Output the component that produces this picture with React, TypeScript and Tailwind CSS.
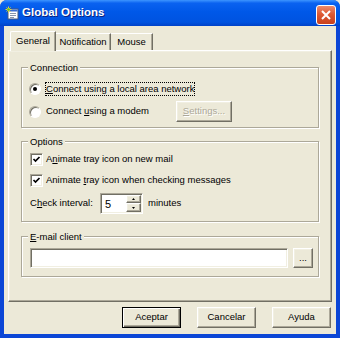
import React from "react";

const raised =
	"border border-t-white border-l-white border-r-[#716F64] border-b-[#716F64] shadow-[inset_-1px_-1px_0_#ACA899,inset_1px_1px_0_#F1EFE2]";
const sunken =
	"border border-t-[#ACA899] border-l-[#ACA899] border-r-white border-b-white shadow-[inset_1px_1px_0_#716F64,inset_-1px_-1px_0_#F1EFE2]";
const etched = "border border-[#ACA899] shadow-[inset_1px_1px_0_#fff,1px_1px_0_#fff]";

function Radio({ checked }: { checked?: boolean }) {
	return (
		<div className="relative w-[12px] h-[12px] shrink-0 rounded-full bg-white border border-t-[#ACA899] border-l-[#ACA899] border-r-white border-b-white shadow-[inset_1px_1px_0_#716F64]">
			{checked && <div className="absolute left-[3px] top-[3px] w-[4px] h-[4px] rounded-full bg-black" />}
		</div>
	);
}

function Check() {
	return (
		<div className={`w-[13px] h-[13px] shrink-0 bg-white flex items-center justify-center ${sunken}`}>
			<svg width="9" height="9" viewBox="0 0 9 9">
				<path d="M1.5 4 L3.5 6 L7.5 2" fill="none" stroke="#000" strokeWidth="1.7" />
			</svg>
		</div>
	);
}

function Group({ label, className, children }: { label: React.ReactNode; className?: string; children: React.ReactNode }) {
	return (
		<div className={`relative ${etched} ${className ?? ""}`}>
			<span className="absolute left-[6px] -top-[7px] px-[2px] bg-[#ECE9D8] leading-[13px]">{label}</span>
			{children}
		</div>
	);
}

function Key({ children }: { children: React.ReactNode }) {
	return <span className="underline underline-offset-[1px]">{children}</span>;
}

export default function App() {
	return (
		<div className="w-[340px] h-[338px] bg-[#ECE9D8] font-['Liberation_Sans',Arial,sans-serif] text-[9.5px] text-black">
			<div className="flex flex-col h-full rounded-t-[7px] overflow-hidden bg-[#0B46D6]">
				{/* title bar */}
				<div className="h-[26px] shrink-0 flex bg-[linear-gradient(180deg,#3D95FF_0%,#0A62F0_12%,#0058E8_45%,#0053E0_85%,#0142C8_100%)]">
					<div className="flex items-center pl-[5px]">
						<svg width="14" height="14" viewBox="0 0 14 14">
							<rect x="3" y="3" width="10" height="10" fill="#fff" stroke="#4a5a7a" strokeWidth="1" />
							<rect x="3.5" y="3.5" width="9" height="2" fill="#3c6fd0" />
							<path d="M5 7.5h6M5 9.5h6M5 11.5h4" stroke="#8a96aa" strokeWidth="1" />
							<path d="M3.5 0.5v6M0.5 3.5h6M1.5 1.5l4 4M5.5 1.5l-4 4" stroke="#e8d838" strokeWidth="1" />
							<circle cx="3.5" cy="3.5" r="1.3" fill="#5ac02a" />
						</svg>
						<span className="ml-[3px] text-[11.5px] font-bold text-white [text-shadow:1px_1px_0_#0A2480]">
							Global Options
						</span>
					</div>
					<div className="ml-auto mt-[5px] mr-[4px] w-[20px] h-[20px] rounded-[3px] border border-white bg-[linear-gradient(180deg,#EC8B6C_0%,#DE5A34_45%,#C8401C_100%)] flex items-center justify-center">
						<svg width="12" height="12" viewBox="0 0 12 12">
							<path d="M2 2 L10 10 M10 2 L2 10" stroke="#fff" strokeWidth="2" />
						</svg>
					</div>
				</div>

				{/* client area */}
				<div className="mx-[4px] mb-[4px] flex-1 flex flex-col bg-[#ECE9D8]">
					{/* tabs */}
					<div className="mt-[5px] pl-[6px] h-[19px] flex items-end">
						<div className="relative z-10 -mb-[1px] w-[46px] h-[20px] flex items-center justify-center bg-[#ECE9D8] border-l border-t border-white border-r border-r-[#716F64] rounded-tl-[2px] shadow-[inset_-1px_0_0_#ACA899]">
							General
						</div>
						<div className="w-[55px] h-[17px] flex items-center justify-center border-t border-white border-r border-r-[#716F64] shadow-[inset_-1px_0_0_#ACA899]">
							Notification
						</div>
						<div className="w-[42px] h-[17px] flex items-center justify-center border-t border-white border-r border-r-[#716F64] shadow-[inset_-1px_0_0_#ACA899]">
							Mouse
						</div>
					</div>

					{/* tab panel */}
					<div className={`mx-[4px] h-[252px] flex flex-col pt-[16px] px-[12px] ${raised}`}>
						<Group label="Connection" className="h-[61px] pl-[7px] pt-[13px]">
							<div className="h-[16px] flex items-center">
								<Radio checked />
								<span className="ml-[4px] border border-dotted border-black leading-[12px]">
									<Key>C</Key>onnect using a local area network
								</span>
							</div>
							<div className="mt-[4px] h-[21px] flex items-center">
								<div className="w-[147px] flex items-center">
									<Radio />
									<span className="ml-[5px]">
										Connect <Key>u</Key>sing a modem
									</span>
								</div>
								<div className={`w-[56px] h-[21px] flex items-center justify-center text-[#ACA899] [text-shadow:1px_1px_0_#fff] ${raised}`}>
									<Key>S</Key>ettings...
								</div>
							</div>
						</Group>

						<Group label="Options" className="mt-[13px] h-[81px] pl-[8px] pt-[9px]">
							<div className="h-[16px] flex items-center">
								<Check />
								<span className="ml-[3px]">
									A<Key>n</Key>imate tray icon on new mail
								</span>
							</div>
							<div className="mt-[5px] h-[16px] flex items-center">
								<Check />
								<span className="ml-[3px]">
									Animate <Key>t</Key>ray icon when checking messages
								</span>
							</div>
							<div className="mt-[5px] h-[21px] flex items-center">
								<span className="w-[70px]">
									C<Key>h</Key>eck interval:
								</span>
								<div className={`w-[43px] h-[21px] bg-white flex p-[1px] ${sunken}`}>
									<span className="flex-1 pl-[3px] pt-[2px] text-[11px] leading-[14px]">5</span>
									<div className="w-[15px] flex flex-col">
										<div className={`h-[8px] bg-[#ECE9D8] flex items-center justify-center ${raised}`}>
											<svg width="3" height="2" viewBox="0 0 3 2">
												<path d="M1.5 0 L3 2 L0 2 Z" fill="#000" />
											</svg>
										</div>
										<div className={`h-[9px] bg-[#ECE9D8] flex items-center justify-center ${raised}`}>
											<svg width="3" height="2" viewBox="0 0 3 2">
												<path d="M0 0 L3 0 L1.5 2 Z" fill="#000" />
											</svg>
										</div>
									</div>
								</div>
								<span className="ml-[5px]">minutes</span>
							</div>
						</Group>

						<Group label={<><Key>E</Key>-mail client</>} className="mt-[14px] h-[41px] pl-[8px] pt-[11px]">
							<div className="flex items-center">
								<div className={`w-[258px] h-[20px] bg-white ${sunken}`} />
								<div className={`ml-[5px] w-[20px] h-[20px] flex items-center justify-center ${raised}`}>...</div>
							</div>
						</Group>
					</div>

					{/* dialog buttons */}
					<div className="mt-[5px] pr-[5px] flex justify-end gap-[16px]">
						<div className="w-[59px] h-[21px] flex items-center justify-center border border-black shadow-[inset_1px_1px_0_#fff,inset_-1px_-1px_0_#716F64,inset_-2px_-2px_0_#ACA899]">
							Aceptar
						</div>
						<div className={`w-[59px] h-[21px] flex items-center justify-center ${raised}`}>Cancelar</div>
						<div className={`w-[59px] h-[21px] flex items-center justify-center ${raised}`}>Ayuda</div>
					</div>
				</div>
			</div>
		</div>
	);
}
